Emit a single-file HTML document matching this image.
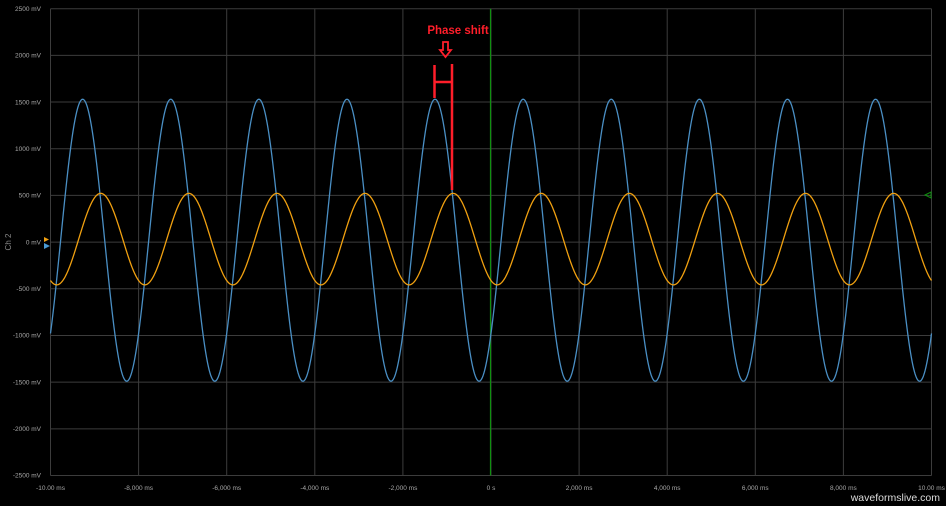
<!DOCTYPE html>
<html><head><meta charset="utf-8"><style>
html,body{margin:0;padding:0;background:#000;width:946px;height:506px;overflow:hidden}
svg{display:block}
text{font-family:"Liberation Sans",sans-serif}
</style></head><body>
<svg id="s" width="946" height="506" viewBox="0 0 946 506" xmlns="http://www.w3.org/2000/svg">
<rect x="0" y="0" width="946" height="506" fill="#000"/>
<g id="grid" stroke="#3c3c3c" stroke-width="1"></g>
<g id="yl" fill="#a8a8a8" font-size="6.5" text-anchor="end"></g>
<g id="xl" fill="#a8a8a8" font-size="6.5" text-anchor="middle"></g>
<text x="11" y="242" fill="#8a8a8a" font-size="8" text-anchor="middle" transform="rotate(-90 11 242)">Ch 2</text>
<line x1="490.5" y1="8.7" x2="490.5" y2="475.5" stroke="#0f8f0f" stroke-width="1.2"/>
<path id="blue" fill="none" stroke="#4a8fc4" stroke-width="1.3"/>
<path id="orange" fill="none" stroke="#f0a010" stroke-width="1.3"/>
<polygon points="44,237 49,239.5 44,242" fill="#f0a010"/>
<polygon points="44,243 50,246 44,249" fill="#4a9ad4"/>
<polygon points="925,195 931,192 931,198" fill="none" stroke="#0f8f0f" stroke-width="1"/>
<g stroke="#ff1e2a" stroke-width="2.5" fill="none">
<line x1="434.5" y1="65" x2="434.5" y2="98"/>
<line x1="452" y1="64" x2="452" y2="190"/>
<line x1="434.5" y1="82" x2="452" y2="82"/>
</g>
<path d="M443,42 H448 V50 H451 L445.5,57 L440,50 H443 Z" fill="none" stroke="#ff1e2a" stroke-width="1.8"/>
<text x="458" y="34" fill="#ff1e2a" font-size="11.5" font-weight="bold" text-anchor="middle">Phase shift</text>
<text x="940" y="501" fill="#ddd" font-size="10.5" text-anchor="end">waveformslive.com</text>
</svg>
<script>
var L=50.5,R=931.5,T=8.7,B=475.5;
var px=(R-L)/20, py=(B-T)/5000, y0=(T+B)/2;
function X(t){return L+(t+10)*px}
function Y(v){return y0-v*py}
var g=document.getElementById('grid'),yl=document.getElementById('yl'),xl=document.getElementById('xl'),h='',a='',b='';
for(var i=0;i<=10;i++){var v=2500-i*500,y=Y(v);
h+='<line x1="'+L+'" y1="'+y+'" x2="'+R+'" y2="'+y+'"/>';
a+='<text x="41" y="'+(y+2.2)+'">'+v+' mV</text>';}
var lab=['-10.00 ms','-8,000 ms','-6,000 ms','-4,000 ms','-2,000 ms','0 s','2,000 ms','4,000 ms','6,000 ms','8,000 ms','10.00 ms'];
for(var i=0;i<=10;i++){var t=-10+2*i,x=X(t);
h+='<line x1="'+x+'" y1="'+T+'" x2="'+x+'" y2="'+B+'"/>';
b+='<text x="'+x+'" y="490">'+lab[i]+'</text>';}
g.innerHTML=h;yl.innerHTML=a;xl.innerHTML=b;
function wave(A,off,tp){var d='';for(var x=L;x<=R;x+=0.5){var t=(x-L)/px-10;var v=off+A*Math.cos(Math.PI*(t-tp));d+=(d?'L':'M')+x.toFixed(1)+','+Y(v).toFixed(2);}return d;}
document.getElementById('blue').setAttribute('d',wave(1510,20,-1.27));
document.getElementById('orange').setAttribute('d',wave(490,32,-0.86));
</script>
</body></html>
